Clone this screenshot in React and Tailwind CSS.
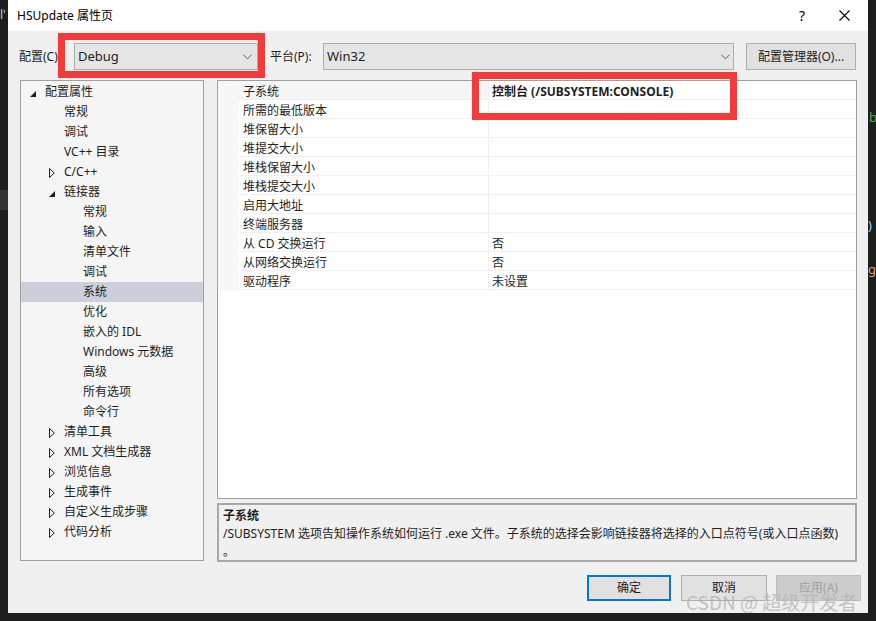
import React from "react";

const treeItems = [
  { t: "配置属性", l: 0, s: "open" },
  { t: "常规", l: 1 },
  { t: "调试", l: 1 },
  { t: "VC++ 目录", l: 1 },
  { t: "C/C++", l: 1, s: "closed" },
  { t: "链接器", l: 1, s: "open" },
  { t: "常规", l: 2 },
  { t: "输入", l: 2 },
  { t: "清单文件", l: 2 },
  { t: "调试", l: 2 },
  { t: "系统", l: 2, sel: true },
  { t: "优化", l: 2 },
  { t: "嵌入的 IDL", l: 2 },
  { t: "Windows 元数据", l: 2 },
  { t: "高级", l: 2 },
  { t: "所有选项", l: 2 },
  { t: "命令行", l: 2 },
  { t: "清单工具", l: 1, s: "closed" },
  { t: "XML 文档生成器", l: 1, s: "closed" },
  { t: "浏览信息", l: 1, s: "closed" },
  { t: "生成事件", l: 1, s: "closed" },
  { t: "自定义生成步骤", l: 1, s: "closed" },
  { t: "代码分析", l: 1, s: "closed" },
];

const padClass = ["pl-[9px]", "pl-[28px]", "pl-[47px]"];

const gridRows = [
  ["子系统", "控制台 (/SUBSYSTEM:CONSOLE)", true],
  ["所需的最低版本", ""],
  ["堆保留大小", ""],
  ["堆提交大小", ""],
  ["堆栈保留大小", ""],
  ["堆栈提交大小", ""],
  ["启用大地址", ""],
  ["终端服务器", ""],
  ["从 CD 交换运行", "否"],
  ["从网络交换运行", "否"],
  ["驱动程序", "未设置"],
];

function Tri({ s }) {
  if (s === "open")
    return (
      <svg width="6" height="6" viewBox="0 0 6 6" className="mt-[4px]">
        <polygon points="6,0 6,6 0,6" fill="#1e1e1e" />
      </svg>
    );
  if (s === "closed")
    return (
      <svg width="6" height="10" viewBox="0 0 6 10" className="mt-[1px]">
        <polygon points="0.5,0.5 5.3,5 0.5,9.5" fill="none" stroke="#1e1e1e" strokeWidth="1" />
      </svg>
    );
  return null;
}

function Chevron() {
  return (
    <svg width="9" height="6" viewBox="0 0 9 6">
      <path d="M0.5 0.8 L4.5 4.8 L8.5 0.8" fill="none" stroke="#555" strokeWidth="1" />
    </svg>
  );
}

export default function App() {
  return (
    <div className="relative w-[876px] h-[621px] bg-[#1e1e1e] overflow-hidden font-['Noto_Sans','Noto_Sans_CJK_SC',sans-serif] text-[12px] text-[#1e1e1e]">
      {/* background editor fragments */}
      <span className="absolute left-[0px] top-[6px] text-[12px] text-[#c8c8c8]">l'</span>
      <div className="absolute left-[0px] top-[190px] w-[8px] h-[20px] bg-[#333337]" />
      <span className="absolute left-[869px] top-[108px] text-[13px] text-[#57a64a]">b</span>
      <span className="absolute left-[868px] top-[216px] text-[13px] text-[#9cdcfe]">)</span>
      <span className="absolute left-[868px] top-[260px] text-[13px] text-[#d69d85]">g</span>

      <div className="ml-[8px] w-[860px] h-[613px] bg-[#f0f0f0] flex flex-col">
        {/* title bar */}
        <div className="h-[31px] bg-white flex items-center pl-[9px] pr-[18px]">
          <span className="flex-1 text-[12px] text-black">HSUpdate 属性页</span>
          <span className="text-[14px] text-black mr-[34px]">?</span>
          <svg width="11" height="11" viewBox="0 0 11 11">
            <path d="M0.5 0.5 L10.5 10.5 M10.5 0.5 L0.5 10.5" stroke="#000" strokeWidth="1.1" />
          </svg>
        </div>

        {/* config row */}
        <div className="flex items-center h-[27px] mt-[12px] pl-[11px]">
          <span className="w-[55px] pt-[1px]">配置(C):</span>
          <div className="w-[184px] h-[27px] bg-[#e5e5e5] border border-[#acacac] flex items-center pl-[3px] pr-[5px]">
            <span className="flex-1 text-[13px] pt-[1px]">Debug</span>
            <Chevron />
          </div>
          <span className="w-[53px] ml-[12px] pt-[1px]">平台(P):</span>
          <div className="w-[411px] h-[27px] bg-[#e5e5e5] border border-[#acacac] flex items-center pl-[3px] pr-[3px]">
            <span className="flex-1 text-[13px] pt-[1px]">Win32</span>
            <Chevron />
          </div>
          <div className="ml-[12px] w-[110px] h-[27px] bg-[#e1e1e1] border border-[#adadad] flex items-center justify-center pt-[1px]">
            配置管理器(O)...
          </div>
        </div>

        {/* main area */}
        <div className="flex mt-[10px] pl-[12px] h-[482px]">
          {/* tree */}
          <div className="w-[184px] h-[481px] border border-[#a0a0a0] bg-[#f5f5f5] pt-[1px]">
            {treeItems.map((it, i) => (
              <div
                key={i}
                className={`flex items-center h-[20px] ${padClass[it.l]} ${it.sel ? "bg-[#cccedb]" : ""}`}
              >
                <div className="w-[15px] flex items-center">
                  <Tri s={it.s} />
                </div>
                <span className="whitespace-nowrap leading-[20px]">{it.t}</span>
              </div>
            ))}
          </div>

          {/* right column */}
          <div className="ml-[13px] w-[640px] flex flex-col">
            <div className="h-[419px] border border-[#a0a0a0] bg-white">
              {gridRows.map(([k, v, b], i) => (
                <div key={i} className="flex h-[19px]">
                  <div className="w-[21px] bg-[#f7f7f7]" />
                  <div
                    className={`w-[249px] pl-[4px] pt-[3px] border-b border-[#f0f0f5] flex items-center whitespace-nowrap ${
                      i === 0 ? "bg-[#f5f5f5]" : ""
                    }`}
                  >
                    {k}
                  </div>
                  <div
                    className={`flex-1 pl-[3px] pt-[3px] border-b border-l border-[#f0f0f5] flex items-center whitespace-nowrap ${
                      b ? "font-bold" : ""
                    }`}
                  >
                    {v}
                  </div>
                </div>
              ))}
            </div>
            <div className="mt-[4px] h-[59px] border-2 border-[#a8a8a8] bg-[#f0f0f0] pl-[4px] pt-[2px] overflow-hidden">
              <div className="font-bold leading-[18px]">子系统</div>
              <div className="leading-[18px] whitespace-nowrap">
                /SUBSYSTEM 选项告知操作系统如何运行 .exe 文件。子系统的选择会影响链接器将选择的入口点符号(或入口点函数)
              </div>
              <div className="leading-[18px]">。</div>
            </div>
          </div>
        </div>

        {/* buttons */}
        <div className="flex justify-end pr-[7px] mt-[13px]">
          <div className="w-[84px] h-[26px] border-2 border-[#0078d7] bg-[#e1e1e1] flex items-center justify-center">
            确定
          </div>
          <div className="ml-[10px] w-[86px] h-[26px] border border-[#adadad] bg-[#e1e1e1] flex items-center justify-center">
            取消
          </div>
          <div className="ml-[9px] w-[85px] h-[26px] border border-[#bfbfbf] bg-[#cccccc] text-[#a0a0a0] flex items-center justify-center">
            应用(A)
          </div>
        </div>
      </div>

      {/* red annotation boxes */}
      <div className="absolute left-[58px] top-[33px] w-[207px] h-[45px] border-[7px] border-[#f23c3c]" />
      <div className="absolute left-[472px] top-[72px] w-[265px] h-[48px] border-[7px] border-[#f23c3c]" />

      {/* watermark */}
      <div className="absolute left-[686px] top-[589px] text-[19px] leading-[26px] text-[#b4b4b4]/80 font-['Noto_Sans_CJK_SC',sans-serif] whitespace-nowrap">
        CSDN @ 超级开发者
      </div>
    </div>
  );
}
